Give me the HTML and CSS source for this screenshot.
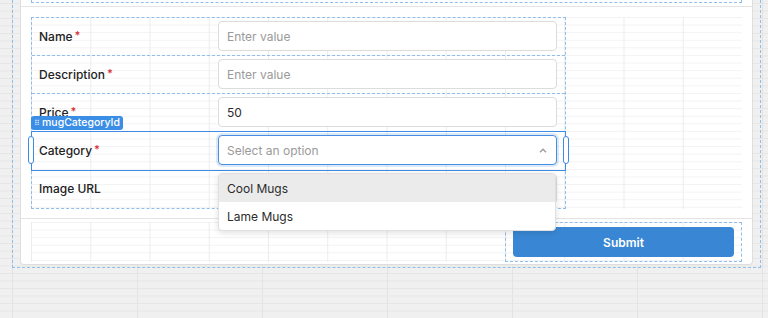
FILE: index.html
```html
<!DOCTYPE html>
<html lang="en">
<head>
    <meta charset="UTF-8">
    <meta name="viewport" content="width=device-width, initial-scale=1.0">
    <title>Form builder</title>
    <link rel="stylesheet" href="styles.css">
</head>
<body>
    <div class="screen">
        <div class="card">
            <div class="card-top">
                <div class="prev-block"></div>
            </div>

            <div class="card-body">
                <div class="grid-area">
                    <div class="form">
                        <div class="field">
                            <label class="field-label">Name<span class="req">*</span></label>
                            <div class="input placeholder">Enter value</div>
                        </div>
                        <div class="field">
                            <label class="field-label">Description<span class="req">*</span></label>
                            <div class="input placeholder">Enter value</div>
                        </div>
                        <div class="field">
                            <label class="field-label">Price<span class="req">*</span></label>
                            <div class="input">50</div>
                        </div>
                        <div class="field selected">
                            <div class="field-tag"><span class="drag-dots">⠿</span>mugCategoryId</div>
                            <span class="handle handle-left"></span>
                            <span class="handle handle-right"></span>
                            <label class="field-label">Category<span class="req">*</span></label>
                            <div class="select-wrap">
                                <div class="input select focused placeholder">
                                    Select an option
                                    <svg class="chevron" width="8" height="5" viewBox="0 0 8 5">
                                        <path d="M1 4.2 L4 1.2 L7 4.2" fill="none" stroke="#9a9a9a" stroke-width="1.3"/>
                                    </svg>
                                </div>
                                <ul class="dropdown">
                                    <li class="option active">Cool Mugs</li>
                                    <li class="option">Lame Mugs</li>
                                </ul>
                            </div>
                        </div>
                        <div class="field">
                            <label class="field-label">Image URL</label>
                            <div class="input placeholder">Enter value</div>
                        </div>
                    </div>
                </div>
            </div>

            <div class="card-footer">
                <div class="grid-area footer-grid">
                    <div class="button-slot">
                        <button type="button" class="btn">Submit</button>
                    </div>
                </div>
            </div>
        </div>
    </div>
</body>
</html>
```

FILE: styles.css
```css
* {
    margin: 0;
    padding: 0;
    box-sizing: border-box;
}

body {
    width: 768px;
    height: 318px;
    overflow: hidden;
    font-family: Inter, "Noto Sans", sans-serif;
    color: #2c2c2c;
    background-color: #f0f0f0;
    background-image:
        linear-gradient(to right, #e3e3e3 1px, transparent 1px),
        linear-gradient(to bottom, #e6e6e6 1px, transparent 1px);
    background-size: 125px 100%, 100% 7.5px;
    background-position: 12px 0, 0 3px;
}

/* outer screen slot */
.screen {
    margin-left: 12px;
    width: 749px;
    border: 1px dashed #8fbdec;
    border-top: none;
    padding: 0 7px 2px 7px;
}

.card {
    background: white;
    border: 1px solid #dedede;
    border-top: none;
    border-radius: 0 0 4px 4px;
}

.card-top {
    height: 7px;
    border-bottom: 1px solid #e4e4e4;
    padding: 0 10px;
}

.prev-block {
    height: 3px;
    border: 1px dashed #8fbdec;
    border-top: none;
}

.card-body {
    padding: 10px 10px 9px;
}

.card-footer {
    border-top: 1px solid #e4e4e4;
    padding: 3px 10px 2px;
}

.grid-area {
    background-color: white;
    background-image:
        linear-gradient(to right, #ececec 1px, transparent 1px),
        linear-gradient(to bottom, #f3f3f3 1px, transparent 1px);
    background-size: 59.25px 100%, 100% 7.6px;
}

/* form */
.form {
    width: 535px;
    border: 1px dashed #8fbdec;
}

.field {
    position: relative;
    display: grid;
    grid-template-columns: 179px 1fr;
    align-items: center;
    height: 38px;
    padding: 0 8px 1px 7px;
    border-bottom: 1px dashed #8fbdec;
}

.field:last-child {
    border-bottom: none;
}

.field-label {
    font-size: 12px;
    font-weight: 500;
    color: #222;
}

.req {
    color: #d7373f;
    margin-left: 2px;
    font-size: 11px;
    font-weight: 600;
    vertical-align: 2px;
}

.input {
    height: 30px;
    border: 1px solid #dcdcdc;
    border-radius: 4px;
    padding: 0 8px;
    display: flex;
    align-items: center;
    font-size: 12px;
    color: #2c2c2c;
    background: white;
}

.input.placeholder {
    color: #9a9a9a;
}

/* selected field */
.field.selected {
    z-index: 2;
    outline: 1px solid #3f8ae2;
    border-bottom-color: transparent;
}

.field-tag {
    position: absolute;
    left: -1px;
    top: -16px;
    height: 14px;
    padding: 0 3px 0 3px;
    border-radius: 3px;
    background: #3b8ee6;
    color: white;
    font-size: 10.5px;
    font-weight: 500;
    line-height: 14px;
    display: flex;
    align-items: center;
    gap: 2px;
}

.drag-dots {
    font-size: 8px;
    opacity: 0.85;
}

.handle {
    position: absolute;
    top: 4px;
    width: 6px;
    height: 28px;
    background: white;
    border: 1px solid #3f8ae2;
    border-radius: 3px;
    z-index: 3;
}

.handle-left {
    left: -4px;
}

.handle-right {
    right: -4px;
}

.select-wrap {
    position: relative;
}

.select {
    justify-content: space-between;
}

.input.focused {
    border-color: #4a8fdf;
    box-shadow: 0 0 0 2px rgba(74, 143, 223, 0.2);
}

.chevron {
    margin-right: 1px;
}

.dropdown {
    position: absolute;
    left: 0;
    right: 1px;
    top: 38px;
    list-style: none;
    background: white;
    border: 1px solid #e0e0e0;
    border-radius: 4px;
    box-shadow: 0 2px 6px rgba(0, 0, 0, 0.12);
    overflow: hidden;
}

.option {
    height: 28px;
    padding: 0 8px;
    display: flex;
    align-items: center;
    font-size: 12px;
    color: #2c2c2c;
}

.option.active {
    background: #ebebeb;
}

/* footer */
.footer-grid {
    display: grid;
    grid-template-columns: repeat(12, 1fr);
    height: 40px;
}

.button-slot {
    grid-column: 9 / 13;
    border: 1px dashed #8fbdec;
    padding: 4px 7px;
}

.btn {
    width: 100%;
    height: 30px;
    background-color: #3987d4;
    color: white;
    border: none;
    border-radius: 4px;
    font-family: Inter, "Noto Sans", sans-serif;
    font-size: 12px;
    font-weight: 600;
    cursor: pointer;
}
```
